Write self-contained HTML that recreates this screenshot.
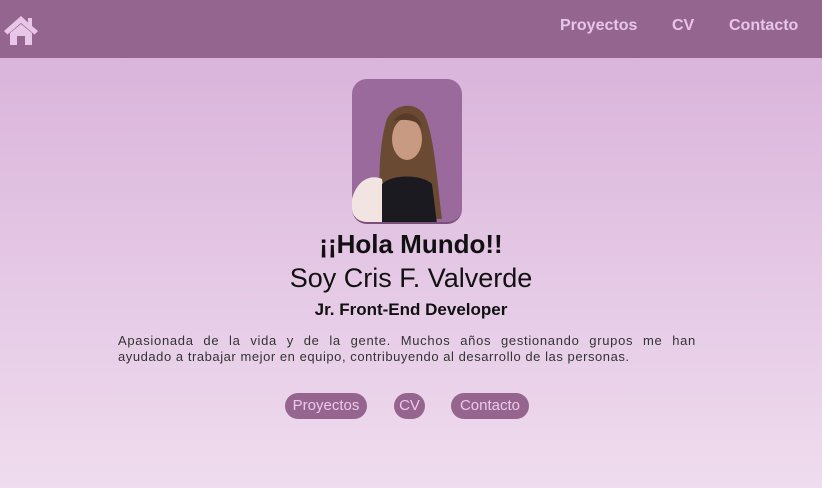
<!DOCTYPE html>
<html><head><meta charset="utf-8"><style>
*{margin:0;padding:0;box-sizing:border-box}
body{width:822px;height:488px;overflow:hidden;font-family:"Liberation Sans",sans-serif;background:linear-gradient(#d7afd9,#efdcee);position:relative}
header{height:58px;background:#94658f;position:relative}
.nav a{position:absolute;top:17px;color:#e8c6e8;font-weight:bold;font-size:16px;text-decoration:none}
.photo{position:absolute;left:352px;top:79px;width:110px;height:145px;border-radius:15px;background:#9a6a9c;overflow:hidden;border-bottom:2px solid #7a4f7a}
.c{position:absolute;left:0;width:822px;text-align:center;color:#111}
.t{position:absolute;left:118px;width:578px;font-size:13px;line-height:16px;color:#333;letter-spacing:.2px}
.b{position:absolute;top:393px;height:26px;border-radius:13px;background:#95658f;color:#ecc9ec;font-size:15px;line-height:26px;text-align:center}
</style></head><body>
<header>
<svg style="position:absolute;left:4px;top:15px" width="34" height="30" viewBox="0 0 34 30"><path d="M17 1 L0 16 L3.5 19.5 L17 8 L30.5 19.5 L34 16 L28 11 L28 3 L24 3 L24 7.5 Z" fill="#e8c6e8"/><path d="M6 18 L17 9 L28 18 L28 30 L21 30 L21 21 L13 21 L13 30 L6 30 Z" fill="#e8c6e8"/></svg>
<div class="nav"><a style="left:560px">Proyectos</a><a style="left:672px">CV</a><a style="left:729px">Contacto</a></div>
</header>
<div class="photo">
<svg width="110" height="145" viewBox="0 0 110 145">
<path d="M30 140 C25 100 28 60 35 40 C42 25 62 22 72 35 C82 55 85 100 90 140 Z" fill="#6b4a33"/>
<ellipse cx="55" cy="60" rx="15" ry="21" fill="#c89a82"/>
<path d="M0 145 L0 120 C5 100 20 95 30 100 L35 145 Z" fill="#f2e4e0"/>
<path d="M30 105 C40 95 70 95 80 105 L85 145 L30 145 Z" fill="#1a1a20"/>
<path d="M42 42 C48 30 66 32 70 48 C62 40 52 40 42 42 Z" fill="#5a3b28"/>
</svg>
</div>
<div class="c" style="top:229px;font-size:26px;font-weight:bold">¡¡Hola Mundo!!</div>
<div class="c" style="top:263px;font-size:27px">Soy Cris F. Valverde</div>
<div class="c" style="top:300px;font-size:17px;font-weight:bold">Jr. Front-End Developer</div>
<div class="t" style="top:333px;letter-spacing:.7px;text-align:justify;text-align-last:justify">Apasionada de la vida y de la gente. Muchos años gestionando grupos me han</div>
<div class="t" style="top:349px;letter-spacing:.55px">ayudado a trabajar mejor en equipo, contribuyendo al desarrollo de las personas.</div>
<div class="b" style="left:285px;width:82px">Proyectos</div>
<div class="b" style="left:394px;width:31px">CV</div>
<div class="b" style="left:451px;width:78px">Contacto</div>
</body></html>
